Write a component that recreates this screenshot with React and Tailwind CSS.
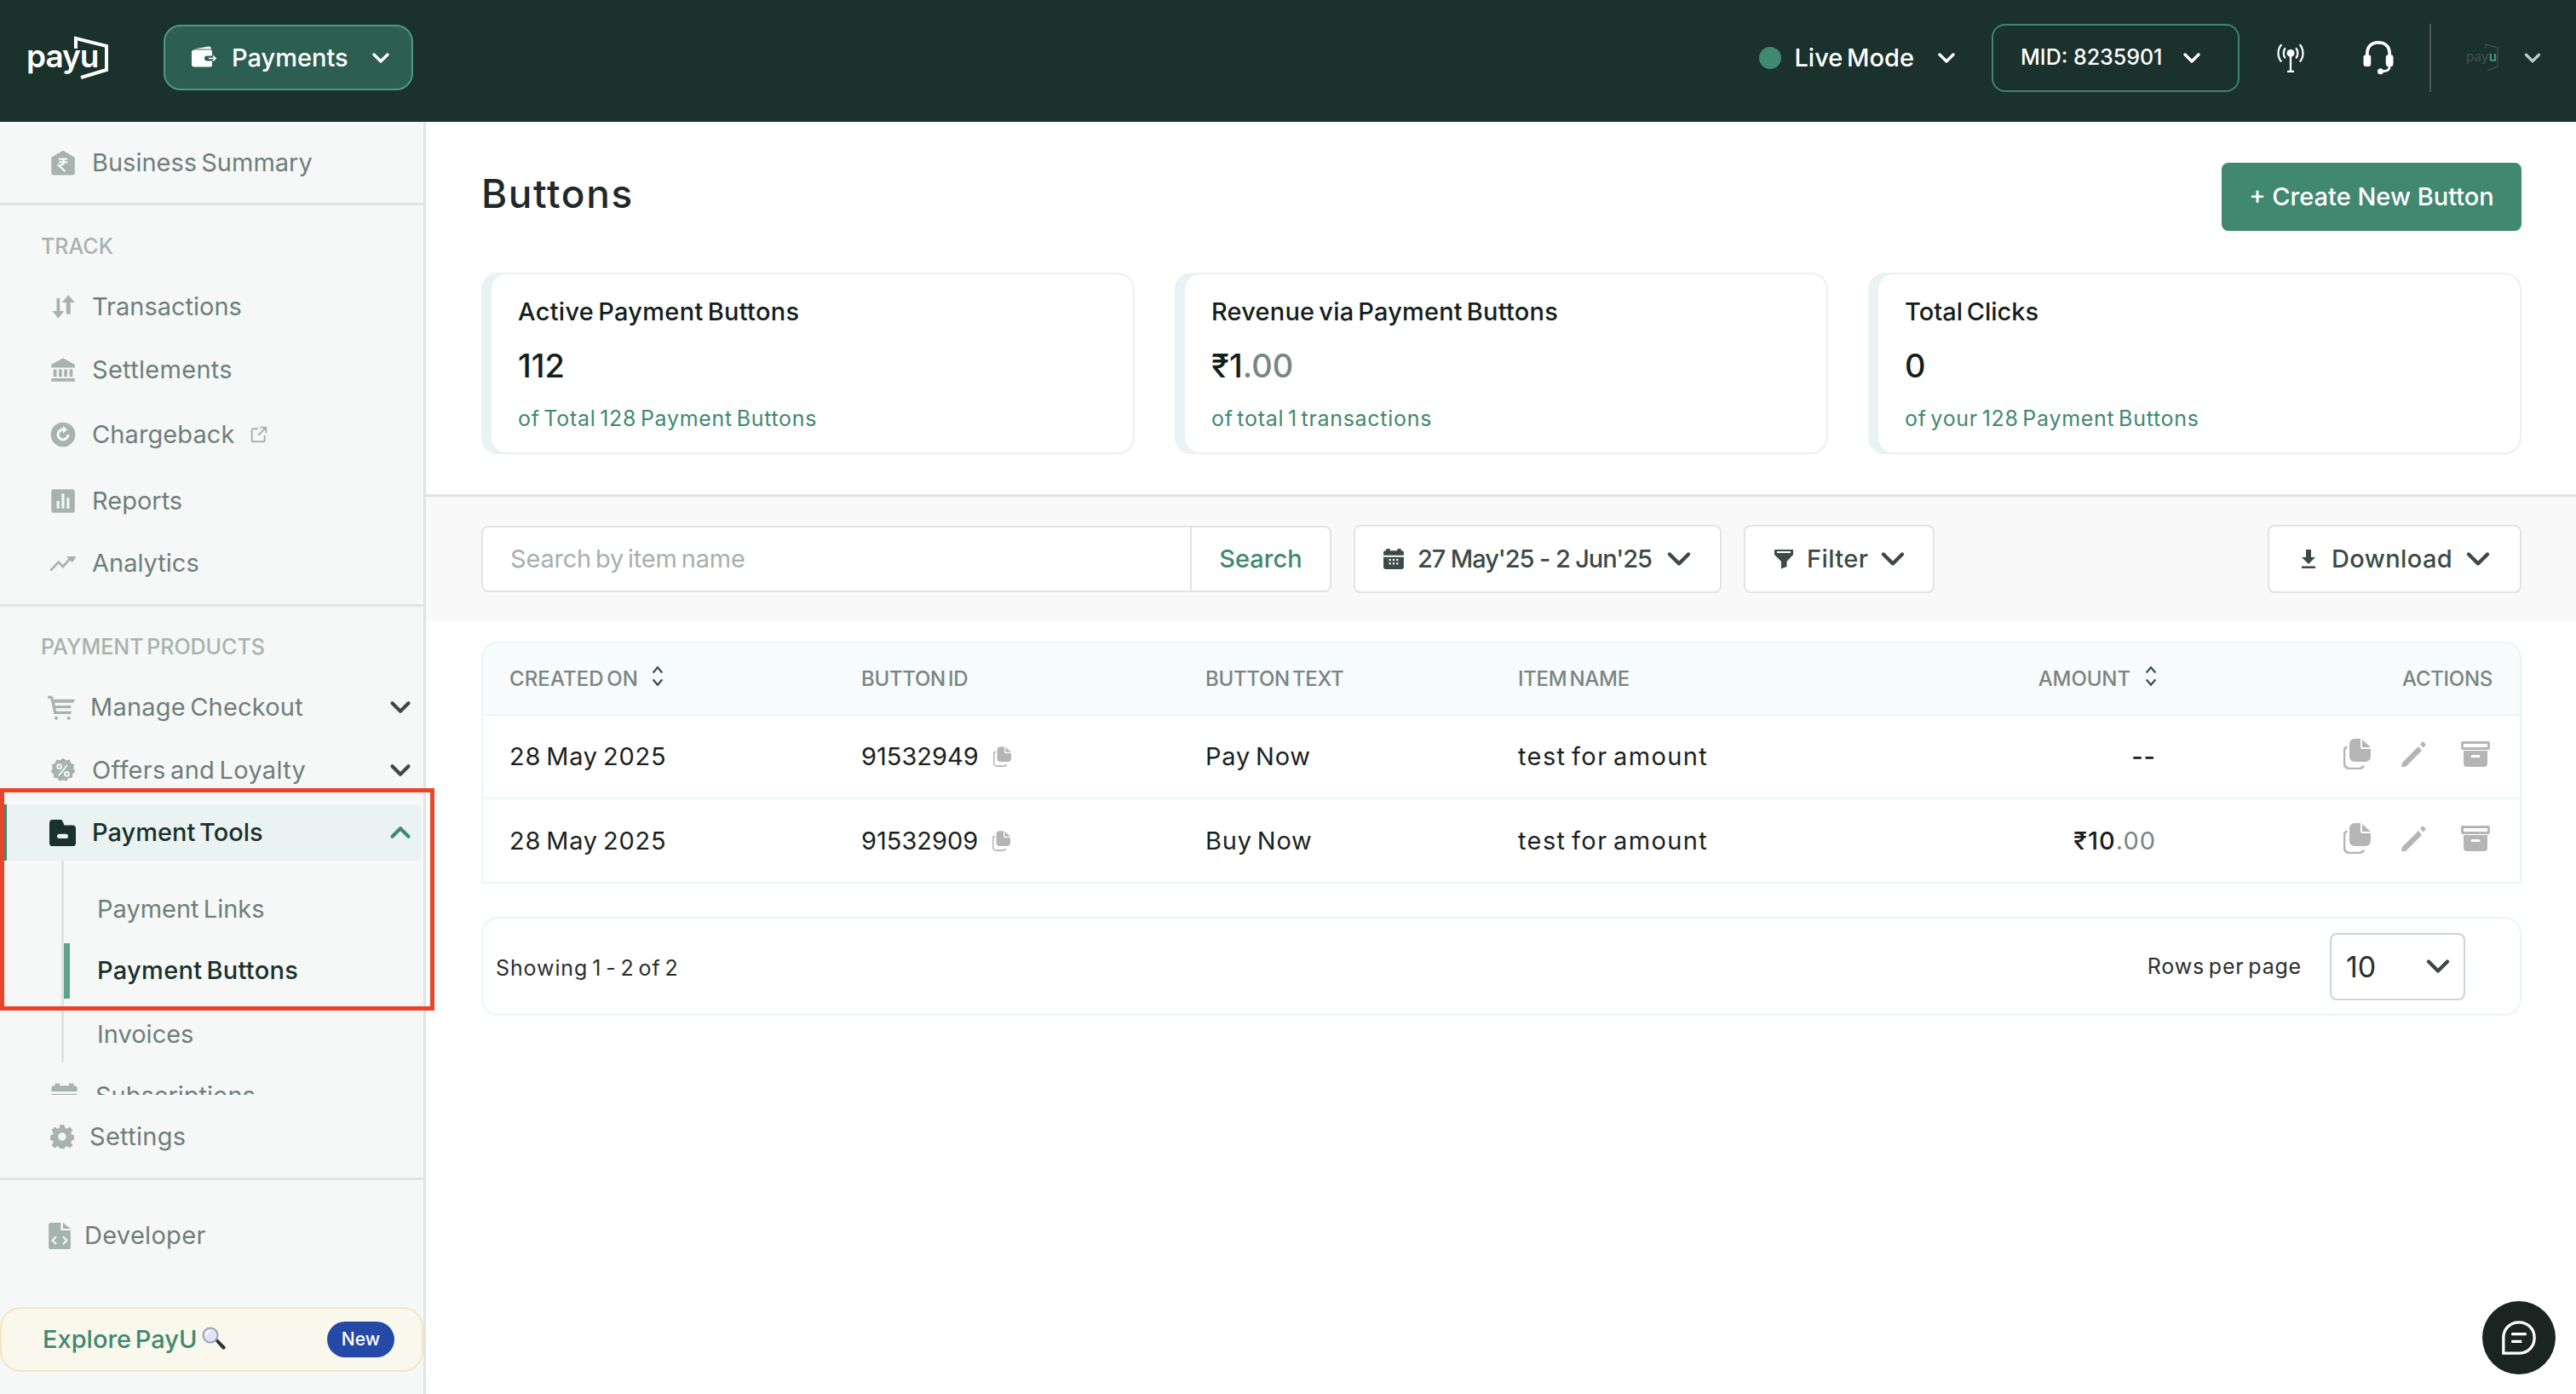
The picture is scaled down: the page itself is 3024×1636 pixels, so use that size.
import React from 'react';
import { ChevronDown, ChevronUp } from 'lucide-react';

const Icon = ({ className = '', children, viewBox = '0 0 24 24' }) => (
  <svg viewBox={viewBox} fill="currentColor" className={className}>{children}</svg>
);

const RupeeHouse = (p) => (
  <Icon {...p}>
    <path d="M12 .5 23 7v14.500a2 2 0 0 1-2 2H3a2 2 0 0 1-2-2V7z" />
    <path d="M8 8.500h8M8 11.500h8M10 8.500c4 0 4 6-2 6l6 5.500" fill="none" stroke="#f6f8f7" strokeWidth="1.800" />
  </Icon>
);
const Transfer = (p) => (
  <Icon {...p}>
    <path d="M6 4h3v12h4l-5.500 7L2 16h4zM15 8h-4l6-7 6 7h-4v11h-4z" />
  </Icon>
);
const Bank = (p) => (
  <Icon {...p}>
    <path d="M12 1 1 7v3h22V7zM3 11.500h3v7H3zM8 11.500h3v7H8zM13 11.500h3v7h-3zM18 11.500h3v7h-3zM1 20h22v3H1z" />
  </Icon>
);
const Chargeback = (p) => (
  <Icon {...p}>
    <path fillRule="evenodd" d="M12 .5a11.500 11.500 0 1 1 0 23 11.500 11.500 0 0 1 0-23zm0 5.500a6 6 0 1 0 6 6h-2.500A3.500 3.500 0 1 1 12 8.500V11l4-3.700L12 3.500z" />
  </Icon>
);
const Reports = (p) => (
  <Icon {...p}>
    <path fillRule="evenodd" d="M3 1h18a2 2 0 0 1 2 2v18a2 2 0 0 1-2 2H3a2 2 0 0 1-2-2V3a2 2 0 0 1 2-2zm3 11v7h2.500v-7zm4.700-7v14h2.500V5zm4.800 4v10H18V9z" />
  </Icon>
);
const Trend = (p) => (
  <Icon {...p}>
    <path d="M1 18.500 8 11l4 4 6-7" fill="none" stroke="currentColor" strokeWidth="2" />
    <path d="M15 6h8v1.500l-3 4z" />
  </Icon>
);
const Cart = (p) => (
  <Icon {...p}>
    <path d="M0 2h4l1 3h19l-1.500 3H6l.5 2.500H21L20 13H7l.5 2.500H21l-.8 2.500H5.500L2.600 4.300H0z" />
    <circle cx="7.500" cy="21.500" r="1.500" />
    <circle cx="18.500" cy="21.500" r="1.500" />
  </Icon>
);
const Offer = (p) => (
  <Icon {...p}>
    <path d="M12 .5l2.800 2 3.400-.5 1.200 3.200 3.100 1.600-.7 3.400 1.700 3-2.500 2.300-.3 3.400-3.400.5-2 2.800-3.300-1-3.300 1-2-2.800-3.400-.5-.3-3.400L.5 13.200l1.700-3-.7-3.400 3.100-1.600L5.800 2l3.400.5z" />
    <path d="M8 17 16 7" stroke="#f6f8f7" strokeWidth="1.500" />
    <circle cx="8.500" cy="8.500" r="1.900" fill="none" stroke="#f6f8f7" strokeWidth="1.500" />
    <circle cx="15.500" cy="15.500" r="1.900" fill="none" stroke="#f6f8f7" strokeWidth="1.500" />
  </Icon>
);
const Folder = (p) => (
  <Icon {...p}>
    <path fillRule="evenodd" d="M3 0h7c1.500 0 2 1 2.500 2.500L13.500 5H21a3 3 0 0 1 3 3v13a3 3 0 0 1-3 3H3a3 3 0 0 1-3-3V3a3 3 0 0 1 3-3zm6 13a1.500 1.500 0 0 0 0 4h6a1.500 1.500 0 0 0 0-4z" />
  </Icon>
);
const CalendarBox = (p) => (
  <Icon {...p}>
    <path fillRule="evenodd" d="M4 1h4v2h8V1h4v2h1a2 2 0 0 1 2 2v16a2 2 0 0 1-2 2H3a2 2 0 0 1-2-2V5a2 2 0 0 1 2-2h1zM1 8v2h22V8zm6 4v2h2v-2zm4 0v2h2v-2zm4 0v2h2v-2zm-8 4v2h2v-2zm4 0v2h2v-2zm4 0v2h2v-2z" />
  </Icon>
);
const Gear = (p) => (
  <Icon {...p}>
    <path fillRule="evenodd" d="M9.800 0h4.400l.6 3.200 2 .9L19.600 2.200l3.100 3.100-1.900 2.800.9 2 3.300.6v4.400l-3.300.6-.9 2 1.900 2.800-3.100 3.100-2.800-1.900-2 .9-.6 3.300H9.800l-.6-3.300-2-.9-2.800 1.900-3.100-3.100 1.900-2.800-.9-2-3.300-.6v-4.400l3.300-.6.9-2-1.900-2.800 3.100-3.100 2.800 1.900 2-.9zM12 8a4 4 0 1 0 0 8 4 4 0 0 0 0-8z" />
  </Icon>
);
const DevFile = (p) => (
  <Icon {...p} viewBox="0 0 20 24">
    <path d="M2 0h9v7h9v15a2 2 0 0 1-2 2H2a2 2 0 0 1-2-2V2a2 2 0 0 1 2-2z" />
    <path d="M13 0l7 5.500h-7z" />
    <path d="M7 12.500 3.500 16 7 19.500M13 12.500l3.500 3.500-3.500 3.500" fill="none" stroke="#f6f8f7" strokeWidth="1.600" />
  </Icon>
);
const Wallet = (p) => (
  <Icon {...p} viewBox="0 0 30 26">
    <path d="M3 3 20 0c1.500 0 3 1 3 3H3z" />
    <path fillRule="evenodd" d="M3 4h19a2 2 0 0 1 2 2v5h-6a3 3 0 0 0 0 6h6v5a2 2 0 0 1-2 2H3a3 3 0 0 1-3-3V7a3 3 0 0 1 3-3z" />
    <path d="M20 14h8M25 11l3 3-3 3" fill="none" stroke="currentColor" strokeWidth="1.600" />
  </Icon>
);
const Antenna = (p) => (
  <svg viewBox="0 0 32 32" fill="none" stroke="currentColor" strokeWidth="2" className={p.className}>
    <circle cx="16" cy="11" r="4" fill="currentColor" stroke="none" />
    <path d="M16 13v17M12.500 30h7" />
    <path d="M10.500 5.500c-2.500 3-2.500 8 0 11M21.500 5.500c2.500 3 2.500 8 0 11M6.500 2c-4.500 5-4.500 13 0 18M25.500 2c4.500 5 4.500 13 0 18" />
  </svg>
);
const Headset = (p) => (
  <svg viewBox="0 0 32 32" fill="none" className={p.className}>
    <path d="M5.500 15v-3.500C5.500 5 10 1.500 16 1.500S26.500 5 26.500 11.500V15" stroke="currentColor" strokeWidth="3" />
    <rect x="2" y="13" width="7" height="11" rx="2.500" fill="currentColor" />
    <rect x="23" y="13" width="7" height="11" rx="2.500" fill="currentColor" />
    <path d="M26.500 24c0 3-2.500 4.500-6 4.500" stroke="currentColor" strokeWidth="2.200" />
    <circle cx="18" cy="28.500" r="2.800" fill="currentColor" />
  </svg>
);
const Funnel = (p) => (
  <Icon {...p}>
    <path fillRule="evenodd" d="M1 1h22v6l-7.500 8v6L9 23.500V15L1 7zm3 2v2h16V3z" />
  </Icon>
);
const Download = (p) => (
  <Icon {...p}>
    <path d="M9 1h6v9h5l-8 8-8-8h5zM4 20.500h16V23H4z" />
  </Icon>
);
const CopyDocs = (p) => (
  <Icon {...p} viewBox="0 0 32 36">
    <path d="M13 0h7v10a2 2 0 0 0 2 2h10v9a6 6 0 0 1-6 6H13a6 6 0 0 1-6-6V6a6 6 0 0 1 6-6z" />
    <path d="M22 1l10 9H22z" />
    <path d="M4.500 9.500C2.500 10 1 11.500 1 14v15a6 6 0 0 0 6 6h11c3 0 5-1.500 6-3.500" fill="none" stroke="currentColor" strokeWidth="2.600" />
  </Icon>
);
const Pencil = (p) => (
  <Icon {...p} viewBox="0 0 30 30">
    <path d="M21 6l-19 19-1 5h5l19-19zM23 3.500 26 0l4 4-3.500 3.500z" />
  </Icon>
);
const ArchiveBox = (p) => (
  <Icon {...p} viewBox="0 0 34 30">
    <path fillRule="evenodd" d="M2 0h30a2 2 0 0 1 2 2v6a2 2 0 0 1-2 2H2a2 2 0 0 1-2-2V2a2 2 0 0 1 2-2zm1 3v4h28V3z" />
    <path fillRule="evenodd" d="M3 11h28v15a4 4 0 0 1-4 4H7a4 4 0 0 1-4-4zm10 5a1.500 1.500 0 0 0 0 3h8a1.500 1.500 0 0 0 0-3z" />
  </Icon>
);
const ExternalBox = (p) => (
  <svg viewBox="0 0 24 24" fill="none" stroke="currentColor" strokeWidth="2.400" className={p.className}>
    <path d="M11 4H4a2 2 0 0 0-2 2v14a2 2 0 0 0 2 2h14a2 2 0 0 0 2-2v-7M14 2h8v8M22 2 11 13" />
  </svg>
);
const SortIcon = () => (
  <svg viewBox="0 0 18 28" fill="none" stroke="#3c4a47" strokeWidth="2.400" className="w-[18px] h-[25px] mb-[6px]">
    <path d="M3 9.500 9 2.500l6 7M3 18.500l6 7 6-7" />
  </svg>
);
const ChatIcon = () => (
  <svg viewBox="0 0 40 40" fill="none" stroke="white" strokeWidth="3" className="w-[44px] h-[44px]">
    <path d="M20 3.500c9.500 0 16.500 7 16.500 16.500S29.500 36.500 20 36.500H3.500V20C3.500 10.500 10.500 3.500 20 3.500z" />
    <path d="M12 16h16M12 24h11" />
  </svg>
);
const Magnifier = () => (
  <svg viewBox="0 0 28 28" className="w-[28px] h-[28px] ml-[6px] mb-[2px]">
    <path d="M15.500 16.500 18 14l9 9a2 2 0 0 1-3 3z" fill="#2a2f33" />
    <circle cx="10" cy="10" r="8.500" fill="#dde8f4" stroke="#9aa3af" strokeWidth="2" />
    <path d="M5 10a5 5 0 0 1 5-5" fill="none" stroke="#fff" strokeWidth="2" />
  </svg>
);

const PayuLogo = ({ big }) =>
  big ? (
    <div className="relative w-[96px] h-[54px] ml-[31px] text-white">
      <span className="absolute left-0 top-[3px] text-[37px] leading-[44px] font-semibold tracking-[-1px]">payu</span>
      <svg viewBox="0 0 96 54" fill="none" stroke="white" strokeWidth="4" className="absolute inset-0 w-[96px] h-[54px]">
        <path d="M58 16V4l36 9v28l-30 9" />
      </svg>
    </div>
  ) : (
    <div className="relative w-[38px] h-[34px] text-[#3d4a47]">
      <span className="absolute left-0 top-[6px] text-[15px] leading-[20px] font-semibold">pay<span className="text-[#4d9c84]">u</span></span>
      <svg viewBox="0 0 38 34" fill="none" stroke="#3d4a47" strokeWidth="1.500" className="absolute inset-0 w-[38px] h-[34px]">
        <path d="M23 6V1l14 4v22l-12 5" />
      </svg>
    </div>
  );

const SideRow = ({ icon: I, label, height, iconClass = 'w-[30px] h-[30px] ml-[59px]', gap = 'ml-[19px]', chevron, extra, textClass = '' }) => (
  <div className={`flex items-center ${height} text-[#6f7e7b]`}>
    <span className="text-[#a7b3af] flex">{I && <I className={iconClass} />}</span>
    <span className={`${gap} text-[29px] leading-[40px] ${textClass}`}>{label}</span>
    {extra}
    {chevron && <ChevronDown className="w-[38px] h-[38px] ml-auto mr-[8px] text-[#3c4a47]" strokeWidth={2.6} />}
  </div>
);

const SectionLabel = ({ children, height, top }) => (
  <div className={`${height} ${top} pl-[48px] text-[25px] leading-[24px] font-medium text-[#a7b3af]`}>{children}</div>
);

const Sidebar = () => (
  <aside className="relative w-[500px] flex-shrink-0 flex flex-col bg-[#f6f8f7] border-r-[3px] border-[#e2e4e3]">
    <div className="h-[1142px] overflow-hidden flex-shrink-0">
      <div className="border-b-[3px] border-[#e2e4e3]">
        <SideRow icon={RupeeHouse} label="Business Summary" height="h-[95px]" />
      </div>
      <SectionLabel height="h-[82px]" top="pt-[36px]">TRACK</SectionLabel>
      <SideRow icon={Transfer} label="Transactions" height="h-[74px]" />
      <SideRow icon={Bank} label="Settlements" height="h-[74px]" textClass="tracking-[0.3px]" />
      <SideRow icon={Chargeback} label="Chargeback" height="h-[78px]" extra={<ExternalBox className="w-[20px] h-[20px] ml-[18px] text-[#a7b3af]" />} textClass="tracking-[0.1px]" />
      <SideRow icon={Reports} label="Reports" height="h-[78px]" />
      <SideRow icon={Trend} label="Analytics" height="h-[68px]" iconClass="w-[32px] h-[32px] ml-[58px]" gap="ml-[18px]" />
      <div className="mt-[14px] border-t-[3px] border-[#e2e4e3]" />
      <SectionLabel height="h-[82px]" top="pt-[35px]">PAYMENT PRODUCTS</SectionLabel>
      <SideRow icon={Cart} label="Manage Checkout" height="h-[72px]" iconClass="w-[32px] h-[32px] ml-[56px]" gap="ml-[18px]" chevron textClass="tracking-[0.2px]" />
      <SideRow icon={Offer} label="Offers and Loyalty" height="h-[76px]" iconClass="w-[30px] h-[30px] ml-[59px]" gap="ml-[19px]" chevron textClass="tracking-[0.3px]" />
      <div className="mt-[2px] ml-[5px] mr-[2px] h-[66px] flex items-center bg-[#eaf3f2] border-l-[3px] border-[#418870] text-[#1a312c] rounded-r-[8px]">
        <Folder className="w-[31px] h-[31px] ml-[50px] text-[#1a312c]" />
        <span className="ml-[19px] text-[29px] leading-[40px] font-medium">Payment Tools</span>
        <ChevronUp className="w-[38px] h-[38px] ml-auto mr-[6px] text-[#418870]" strokeWidth={2.6} />
      </div>
      <div className="ml-[72px] h-[237px] border-l-[3px] border-[#e0e3e2] flex flex-col text-[29px] leading-[40px]">
        <div className="mt-[24px] h-[68px] flex items-center pl-[39px] text-[#6f7e7b]">Payment Links</div>
        <div className="mt-[7px] h-[66px] flex items-center pl-[32px] border-l-[7px] border-[#5fa18c] text-[#1a312c] font-medium tracking-[0.3px]">Payment Buttons</div>
        <div className="mt-[9px] h-[68px] flex items-center pl-[39px] text-[#6f7e7b]">Invoices</div>
      </div>
      <div className="mt-[3px]">
        <SideRow icon={CalendarBox} label="Subscriptions" height="h-[72px]" iconClass="w-[33px] h-[33px] ml-[59px]" gap="ml-[20px]" />
      </div>
    </div>

    <div className="border-b-[3px] border-[#e2e4e3]">
      <SideRow icon={Gear} label="Settings" height="h-[97px]" iconClass="w-[28px] h-[28px] ml-[59px]" gap="ml-[18px]" textClass="tracking-[0.3px]" />
    </div>
    <div className="flex flex-col flex-1">
      <div className="mt-[30px]">
        <SideRow icon={DevFile} label="Developer" height="h-[70px]" iconClass="w-[26px] h-[31px] ml-[57px]" gap="ml-[16px]" textClass="tracking-[0.3px]" />
      </div>
      <div className="mt-auto mb-[26px] h-[76px] flex items-center bg-[#faf8ec] border-[2px] border-[#f2e8c4] rounded-[24px] pl-[48px] pr-[32px]">
        <span className="text-[29px] leading-[40px] font-medium text-[#418870]">Explore PayU</span>
        <Magnifier />
        <span className="ml-auto w-[79px] h-[42px] rounded-full bg-[#2549a6] text-white text-[21px] font-medium flex items-center justify-center">New</span>
      </div>
    </div>
  </aside>
);

const Header = () => (
  <header className="h-[143px] flex-shrink-0 flex items-center bg-[#1a312c] text-white pb-[8px]">
    <PayuLogo big />
    <button className="ml-[65px] w-[293px] h-[77px] flex items-center bg-[#2c5f52] border-[2px] border-[#4f9880] rounded-[20px]">
      <Wallet className="w-[30px] h-[27px] ml-[31px]" />
      <span className="ml-[17px] text-[29px] font-[450]">Payments</span>
      <ChevronDown className="w-[32px] h-[32px] ml-auto mr-[20px]" strokeWidth={2.6} />
    </button>
    <div className="ml-auto flex items-center">
      <span className="w-[26px] h-[26px] rounded-full bg-[#418870]" />
      <span className="ml-[15px] text-[29px] font-[450]">Live Mode</span>
      <ChevronDown className="w-[32px] h-[32px] ml-[22px]" strokeWidth={2.6} />
      <div className="ml-[37px] w-[291px] h-[80px] flex items-center border-[2px] border-[#3c8770] rounded-[16px] pl-[32px]">
        <span className="text-[25px] font-medium [word-spacing:0px]">MID: 8235901</span>
        <ChevronDown className="w-[32px] h-[32px] ml-auto mr-[38px]" strokeWidth={2.6} />
      </div>
      <Antenna className="w-[36px] h-[36px] ml-[42px]" />
      <Headset className="w-[40px] h-[40px] ml-[65px]" />
      <div className="w-[2px] h-[80px] ml-[40px] bg-[#4b5c58]" />
      <div className="ml-[41px]"><PayuLogo /></div>
      <ChevronDown className="w-[30px] h-[30px] ml-[25px] mr-[36px] text-[#b9d3cc]" strokeWidth={2.6} />
    </div>
  </header>
);

const StatCard = ({ title, value, cents, note, titleClass = 'tracking-[0.3px]' }) => (
  <div className="flex-1 h-[213px] rounded-[20px] border-[2px] border-[#eef0f0] bg-[#e8f3f5]">
    <div className="ml-[10px] h-full bg-white rounded-[18px] pl-[31px] flex flex-col">
      <div className={`mt-[24px] text-[29px] leading-[40px] font-medium text-[#141e1c] ${titleClass}`}>{title}</div>
      <div className="mt-[21px] text-[38px] leading-[44px] font-medium text-[#141e1c]">
        {value}{cents && <span className="text-[#7a8583]">{cents}</span>}
      </div>
      <div className="mt-[22px] text-[25px] leading-[36px] text-[#418870] tracking-[0.7px]">{note}</div>
    </div>
  </div>
);

const ToolButton = ({ icon: I, label, className, iconClass, chevMr, labelClass = 'tracking-[0.4px]' }) => (
  <button className={`h-[80px] flex items-center bg-white border-[2px] border-[#e2e4e3] rounded-[8px] text-[29px] font-medium text-[#3c4a47] ${className}`}>
    <I className={`flex-shrink-0 ${iconClass}`} />
    <span className={`ml-[15px] whitespace-nowrap ${labelClass}`}>{label}</span>
    <ChevronDown className={`flex-shrink-0 w-[44px] h-[44px] ml-auto ${chevMr}`} strokeWidth={2.4} />
  </button>
);

const rowGrid = 'grid grid-cols-[413px_404px_367px_548px_204px_1fr] items-center pl-[31px] pr-[32px]';

const TableHeader = () => (
  <div className={`${rowGrid} h-[85px] bg-[#f8fbfc] rounded-t-[20px] border-b-[2px] border-[#eaf4f6] text-[24px] font-medium text-[#7a8583] uppercase tracking-[-0.3px]`}>
    <div className="flex items-center gap-[14px] tracking-[0.1px]">Created on <SortIcon /></div>
    <div>Button ID</div>
    <div>Button Text</div>
    <div>Item Name</div>
    <div className="flex items-center justify-end gap-[15px] tracking-[-0.1px]">Amount <SortIcon /></div>
    <div className="text-right">Actions</div>
  </div>
);

const RowActions = () => (
  <div className="flex items-center justify-end text-[#b5b5b5] pb-[6px]">
    <CopyDocs className="w-[32px] h-[36px]" />
    <Pencil className="w-[30px] h-[30px] ml-[35px]" />
    <ArchiveBox className="w-[34px] h-[30px] ml-[41px] mr-[3px]" />
  </div>
);

const TableRow = ({ date, id, text, item, amount, cents, last }) => (
  <div className={`${rowGrid} ${last ? 'h-[97px]' : 'h-[98px] border-b-[2px] border-[#eaf4f6]'} text-[29px] text-[#1b1f1e]`}>
    <div className="tracking-[0.8px]">{date}</div>
    <div className="flex items-center gap-[17px]">
      {id}
      <CopyDocs className="w-[21px] h-[24px] text-[#b5b5b5]" />
    </div>
    <div className="tracking-[0.8px]">{text}</div>
    <div className="tracking-[1.4px]">{item}</div>
    <div className="text-right font-medium pr-[3px] tracking-[1px]">{amount}{cents && <span className="font-normal text-[#7a8583]">{cents}</span>}</div>
    <RowActions />
  </div>
);

const Main = () => (
  <main className="flex-1 min-w-0 flex flex-col bg-white">
    <div className="h-[440px] flex-shrink-0 pl-[65px] pr-[64px] border-b-[3px] border-[#dfe3e3] flex flex-col">
      <div className="flex items-start justify-between">
        <h1 className="mt-[56px] text-[46px] leading-[56px] font-medium tracking-[1.6px] text-[#1f2a28]">Buttons</h1>
        <button className="mt-[48px] w-[352px] h-[80px] bg-[#418870] text-white text-[29px] font-medium rounded-[8px]">+ Create New Button</button>
      </div>
      <div className="mt-[49px] flex gap-[47px]">
        <StatCard title="Active Payment Buttons" value="112" note="of Total 128 Payment Buttons" />
        <StatCard title="Revenue via Payment Buttons" value="₹1" cents=".00" note="of total 1 transactions" titleClass="tracking-[0.2px]" />
        <StatCard title="Total Clicks" value="0" note="of your 128 Payment Buttons" titleClass="tracking-[0px]" />
      </div>
    </div>

    <div className="h-[146px] flex-shrink-0 bg-[#f9f9f9] pl-[65px] pr-[64px] flex items-center gap-[26px]">
      <div className="w-[998px] h-[78px] flex items-stretch bg-white border-[2px] border-[#e2e4e3] rounded-[8px]">
        <div className="flex-1 flex items-center pl-[32px] text-[29px] tracking-[-0.2px] text-[#a7b0ae] border-r-[2px] border-[#e2e4e3]">Search by item name</div>
        <div className="w-[162px] flex items-center justify-center text-[29px] font-medium text-[#418870]">Search</div>
      </div>
      <ToolButton icon={CalendarBox} label="27 May'25 - 2 Jun'25" className="w-[432px] pl-[32px]" iconClass="w-[26px] h-[26px]" chevMr="mr-[26px]" labelClass="tracking-[-1.1px]" />
      <ToolButton icon={Funnel} label="Filter" className="w-[224px] pl-[33px]" iconClass="w-[24px] h-[24px]" chevMr="mr-[25px]" />
      <ToolButton icon={Download} label="Download" className="w-[298px] pl-[34px] ml-auto" iconClass="w-[24px] h-[24px]" chevMr="mr-[27px]" />
    </div>

    <div className="pl-[65px] pr-[64px] pt-[24px]">
      <div className="border-[2px] border-[#eaf4f6] rounded-t-[20px]">
        <TableHeader />
        <TableRow date="28 May 2025" id="91532949" text="Pay Now" item="test for amount" amount="--" />
        <TableRow date="28 May 2025" id="91532909" text="Buy Now" item="test for amount" amount="₹10" cents=".00" last />
      </div>

      <div className="mt-[39px] h-[116px] flex items-center border-[2px] border-[#eaf4f6] rounded-[20px] pl-[15px]">
        <span className="pt-[6px] text-[25px] tracking-[0.9px] text-[#2a2f2e]">Showing 1 - 2 of 2</span>
        <span className="ml-auto pt-[2px] text-[25px] tracking-[0.8px] text-[#2a2f2e]">Rows per page</span>
        <div className="ml-[33px] mr-[64px] w-[159px] h-[79px] flex items-center border-[2px] border-[#c9d6d3] rounded-[8px] pl-[17px]">
          <span className="text-[34px] text-[#2a2f2e]">10</span>
          <ChevronDown className="w-[44px] h-[44px] ml-auto mr-[8px] text-[#3c4a47]" strokeWidth={2.4} />
        </div>
      </div>
    </div>
  </main>
);

const App = () => (
  <div className="relative h-screen flex flex-col overflow-hidden font-[family-name:Inter,sans-serif] [word-spacing:-3px]">
    <Header />
    <div className="flex flex-1 overflow-hidden">
      <Sidebar />
      <Main />
    </div>
    {/* Red annotation box from the screenshot */}
    <div className="absolute left-0 top-[925px] w-[510px] h-[261px] border-[5px] border-[#e8452c] pointer-events-none" />
    <button className="absolute left-[2914px] top-[1527px] w-[86px] h-[86px] rounded-full bg-[#1a2421] flex items-center justify-center">
      <ChatIcon />
    </button>
  </div>
);

export default App;
